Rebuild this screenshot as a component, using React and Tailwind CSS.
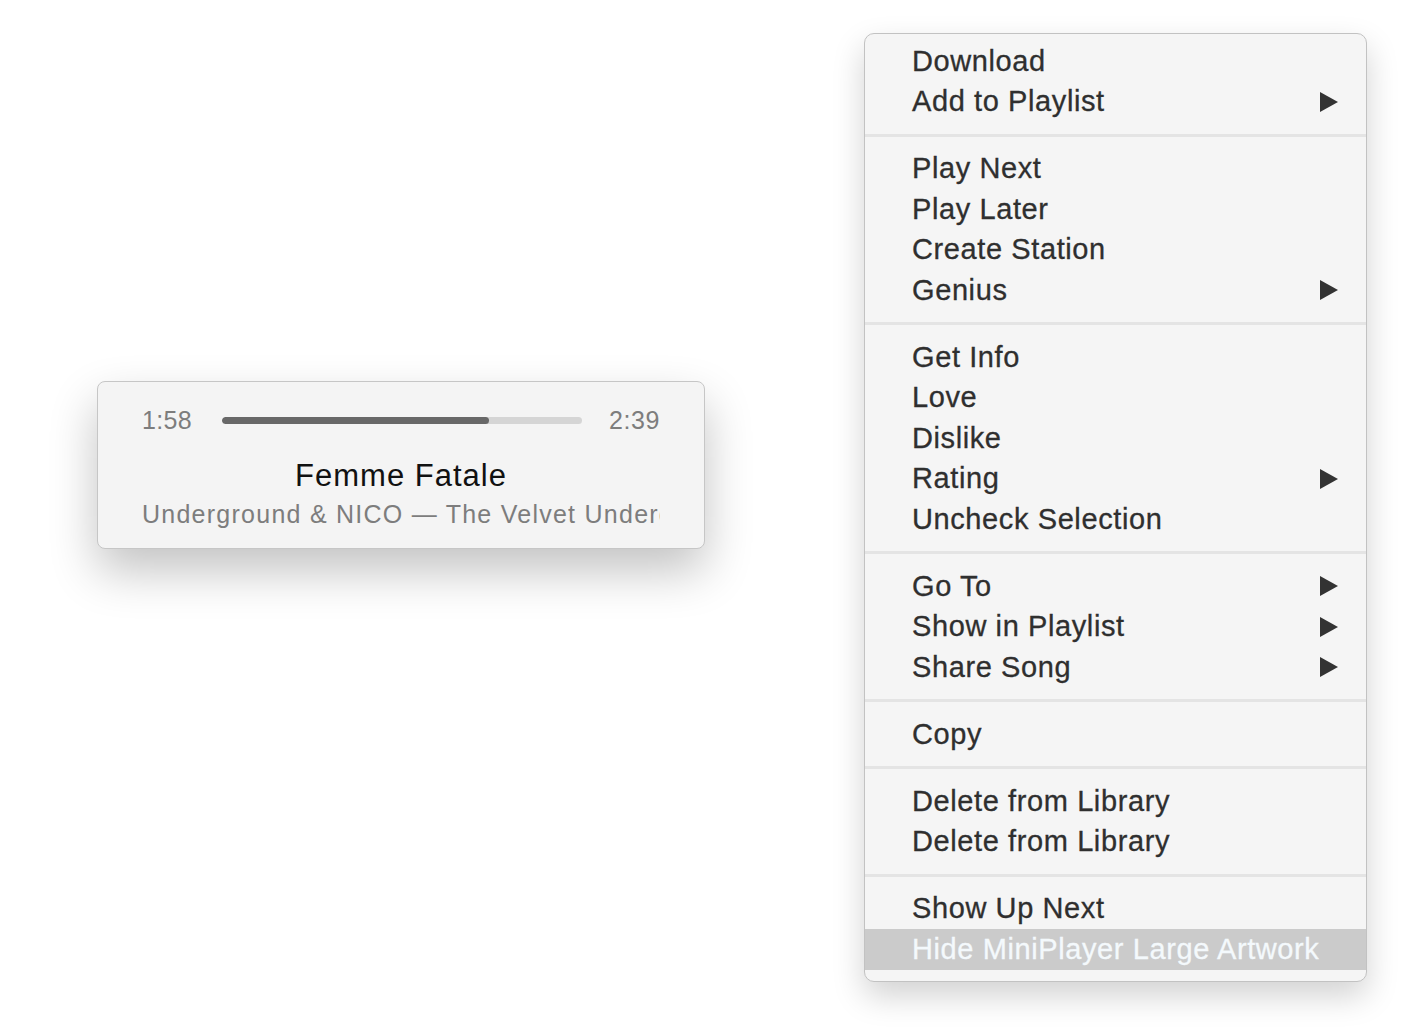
import React from "react";

const sections = [
  [["Download"], ["Add to Playlist", true]],
  [["Play Next"], ["Play Later"], ["Create Station"], ["Genius", true]],
  [["Get Info"], ["Love"], ["Dislike"], ["Rating", true], ["Uncheck Selection"]],
  [["Go To", true], ["Show in Playlist", true], ["Share Song", true]],
  [["Copy"]],
  [["Delete from Library"], ["Delete from Library"]],
  [["Show Up Next"], ["Hide MiniPlayer Large Artwork", false, true]],
];

function Arrow() {
  return (
    <svg width="20" height="22" viewBox="0 0 20 22" className="shrink-0">
      <polygon points="1,1 19,11 1,21" fill="#333333" />
    </svg>
  );
}

function Item({ label, sub, hl }) {
  return (
    <div
      className={
        "h-[40.5px] flex items-center justify-between pl-[47px] pr-[27px] " +
        (hl ? "bg-[#cbcbcb] text-[#f4f9fc]" : "text-[#2f2f2f]")
      }
    >
      <span className="text-[29px] tracking-[0.6px] leading-none whitespace-nowrap [-webkit-text-stroke:0.3px_currentColor]">
        {label}
      </span>
      {sub && <Arrow />}
    </div>
  );
}

export default function App() {
  return (
    <div
      className="w-[1410px] h-[1032px] bg-white flex items-start overflow-hidden"
      style={{ fontFamily: '"Liberation Sans", Arial, sans-serif' }}
    >
      {/* Mini player */}
      <div className="ml-[97px] mt-[381px] w-[608px] h-[168px] rounded-[8px] border border-[#c6c6c6] bg-[#f4f4f4] shadow-[0_22px_48px_rgba(0,0,0,0.24)] flex flex-col px-[44px]">
        <div className="flex items-center h-[36px] mt-[20px]">
          <span className="text-[25px] tracking-[0.3px] text-[#7d7d7d] leading-none w-[49px]">1:58</span>
          <div className="ml-[31px] w-[360px] h-[7px] rounded-full bg-[#d5d5d5] overflow-hidden">
            <div className="h-full w-[267px] rounded-full bg-[#686868]" />
          </div>
          <span className="ml-auto text-[25px] tracking-[0.6px] text-[#7d7d7d] leading-none">2:39</span>
        </div>
        <div className="mt-[20px] text-center text-[31px] tracking-[1px] text-[#111111] leading-[36px]">
          Femme Fatale
        </div>
        <div className="mt-[2px] overflow-hidden whitespace-nowrap text-[25px] tracking-[1.25px] text-[#7d7d7d] leading-[36px]">
          Underground &amp; NICO — The Velvet Underground
        </div>
      </div>

      {/* Context menu */}
      <div className="ml-[159px] mt-[33px] w-[503px] rounded-[10px] border border-[#c2c2c2] bg-[#f5f5f5] shadow-[0_14px_32px_rgba(0,0,0,0.18)] pt-[7px] pb-[11px] overflow-hidden">
        {sections.map((sec, i) => (
          <div key={i}>
            {i > 0 && (
              <div className="h-[26.5px] flex items-center">
                <div className="w-full h-[3px] bg-[#e4e4e4]" />
              </div>
            )}
            {sec.map(([label, sub, hl], j) => (
              <Item key={j} label={label} sub={sub} hl={hl} />
            ))}
          </div>
        ))}
      </div>
    </div>
  );
}
